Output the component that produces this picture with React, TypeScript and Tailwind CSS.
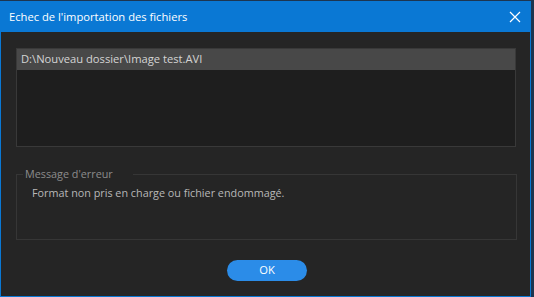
import React from "react";

// Import failure dialog (dark theme, Windows-style title bar)
export default function App() {
  return (
    <div className="flex h-[297px] w-[534px] flex-col bg-[#1d3550] pt-[1px] pr-[3px] font-['Open_Sans',sans-serif]">
      <div className="flex h-[296px] w-[531px] flex-col border-x border-b border-[#0a78d4] bg-[#252525]">
        {/* Title bar */}
        <div className="flex h-[31px] shrink-0 items-center justify-between bg-[#0a78d4] pl-[8px] pr-[8px]">
          <span className="text-[11.2px] leading-none text-white">Echec de l'importation des fichiers</span>
          <svg width="12" height="12" viewBox="0 0 12 12" className="mr-[1px]">
            <path d="M1 1 L11 11 M11 1 L1 11" stroke="#ffffff" strokeWidth="1.2" />
          </svg>
        </div>

        {/* File list */}
        <div className="ml-[15px] mt-[16px] h-[99px] w-[500px] border border-[#393939] bg-[#1e1e1e]">
          <div className="flex h-[21px] items-center bg-[#484848] pl-[4px] text-[11.2px] text-[#d4d4d4]">
            D:\Nouveau dossier\Image test.AVI
          </div>
        </div>

        {/* Error message group */}
        <fieldset className="ml-[15px] mt-[19px] h-[74px] w-[501px] border border-[#363636] px-0">
          <legend className="ml-[6px] w-[110px] px-[2px] text-[10.8px] leading-[16px] text-[#8c8c8c]">
            Message d'erreur
          </legend>
          <p className="mt-[3px] pl-[15px] text-[10.8px] text-[#b8b8b8]">Format non pris en charge ou fichier endommagé.</p>
        </fieldset>

        {/* Actions */}
        <div className="mt-[20px] flex justify-center">
          <button className="ml-[3px] h-[21px] w-[80px] rounded-full bg-[#2b8ce8] text-[11.2px] text-white">OK</button>
        </div>
      </div>
    </div>
  );
}
